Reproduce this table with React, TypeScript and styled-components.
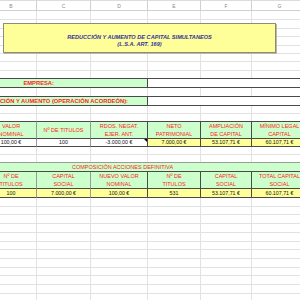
import React from "react";
import styled, { createGlobalStyle } from "styled-components";

const LIGHT = "#e2e2e2";
const MID = "#9a9a9a";
const DARK = "#4a4a4a";
const GREEN = "#ccffcc";
const YELLOW = "#ffff99";

// widths of columns B..H (B is scrolled 14px off the left edge)
const COLS = [51, 54, 57, 53, 51, 56, 60];
const LETTERS = ["B", "C", "D", "E", "F", "G", ""];

const GlobalStyle = createGlobalStyle`
  html, body { margin: 0; padding: 0; background: #fff; }
  body { font-family: "Liberation Sans", Arial, sans-serif; }
`;

const Sheet = styled.div`
  position: relative;
  width: 300px;
  height: 300px;
  overflow: hidden;
  background: #fff;
`;

const Grid = styled.div`
  display: flex;
  flex-direction: column;
  margin-left: -14px;
  width: ${COLS.reduce((a, b) => a + b, 0)}px;
`;

const Row = styled.div<{ $h: number; $overlap?: boolean }>`
  display: flex;
  height: ${(p) => p.$h + (p.$overlap ? 1 : 0)}px;
  margin-top: ${(p) => (p.$overlap ? -1 : 0)}px;
  position: relative;
  flex: 0 0 auto;
`;

interface CellProps {
  $w: number;
  $bg?: string;
  $r?: string;
  $b?: string;
  $t?: string;
  $align?: "left" | "center" | "right";
  $padL?: number;
  $padR?: number;
}

const Cell = styled.div<CellProps>`
  box-sizing: border-box;
  flex: 0 0 ${(p) => p.$w}px;
  width: ${(p) => p.$w}px;
  height: 100%;
  position: relative;
  background: ${(p) => p.$bg ?? "transparent"};
  border-right: 1px solid ${(p) => p.$r ?? LIGHT};
  border-bottom: 1px solid ${(p) => p.$b ?? LIGHT};
  border-top: ${(p) => (p.$t ? `1px solid ${p.$t}` : "none")};
  display: flex;
  flex-direction: column;
  justify-content: center;
  align-items: ${(p) =>
    p.$align === "left" ? "flex-start" : p.$align === "right" ? "flex-end" : "center"};
  padding-left: ${(p) => p.$padL ?? 0}px;
  padding-right: ${(p) => p.$padR ?? 0}px;
  overflow: hidden;
  white-space: nowrap;
`;

const Letter = styled(Cell)`
  color: #8a8a8a;
  font-size: 5px;
  border-top: 1px solid #dcdcdc;
  border-right-color: #d0d0d0;
  border-bottom-color: #cfcfcf;
`;

const Label = styled.span<{ $bold?: boolean }>`
  color: #ff2222;
  font-size: ${(p) => (p.$bold ? 5.8 : 5.5)}px;
  line-height: 8px;
  font-weight: ${(p) => (p.$bold ? 700 : 400)};
  text-align: center;
`;

const Value = styled.span`
  color: #111;
  font-size: 5.3px;
  line-height: 7px;
`;

const Comment = styled.i`
  position: absolute;
  top: 0;
  right: 0;
  width: 0;
  height: 0;
  border-top: 3px solid #000;
  border-left: 3px solid transparent;
`;

const TextBox = styled.div`
  position: absolute;
  left: 3px;
  top: 23px;
  width: 273px;
  height: 30px;
  box-sizing: border-box;
  background: ${YELLOW};
  border: 1px solid #8c8c78;
  box-shadow: 1px 1px 0 #b9b9a4;
  display: flex;
  flex-direction: column;
  align-items: center;
  padding-top: 10px;
`;

const Title = styled.span`
  color: #333399;
  font-size: 5.6px;
  line-height: 7px;
  font-weight: 700;
  font-style: italic;
  white-space: nowrap;
`;

const blank = (h: number, key: string) => (
  <Row $h={h} key={key}>
    {COLS.map((w, i) => (
      <Cell $w={w} key={i} />
    ))}
  </Row>
);

const Band = ({ text, padR }: { text: string; padR: number }) => (
  <Row $h={9} $overlap>
    <Cell $w={162} $bg={GREEN} $t={DARK} $b={DARK} $r={DARK} $align="right" $padR={padR}>
      <Label $bold>{text}</Label>
    </Cell>
    <Cell $w={220} $bg="#fff" $t={DARK} $b={DARK} $r={DARK} />
  </Row>
);

type Col = { head: string[]; value: string; bg: string; comment?: boolean };

const firstTable: Col[] = [
  { head: ["VALOR", "NOMINAL"], value: "100,00 €", bg: "#fff" },
  { head: ["Nº DE TITULOS"], value: "100", bg: "#fff" },
  { head: ["RDOS. NEGAT.", "EJER. ANT."], value: "-3.000,00 €", bg: "#fff", comment: true },
  { head: ["NETO", "PATRIMONIAL"], value: "7.000,00 €", bg: YELLOW },
  { head: ["AMPLIACIÓN", "DE CAPITAL"], value: "53.107,71 €", bg: YELLOW },
  { head: ["MÍNIMO LEGAL", "CAPITAL"], value: "60.107,71 €", bg: YELLOW },
];

const secondTable: Col[] = [
  { head: ["Nº DE", "TITULOS"], value: "100", bg: YELLOW },
  { head: ["CAPITAL", "SOCIAL"], value: "7.000,00 €", bg: YELLOW },
  { head: ["NUEVO VALOR", "NOMINAL"], value: "100,00 €", bg: YELLOW },
  { head: ["Nº DE", "TITULOS"], value: "531", bg: YELLOW },
  { head: ["CAPITAL", "SOCIAL"], value: "53.107,71 €", bg: YELLOW },
  { head: ["TOTAL CAPITAL", "SOCIAL"], value: "60.107,71 €", bg: YELLOW },
];

const inner = (i: number) => (i < 2 ? MID : DARK);

const Table = ({ cols, overlap }: { cols: Col[]; overlap: boolean }) => (
  <>
    <Row $h={17} $overlap={overlap}>
      {cols.map((c, i) => (
        <Cell $w={COLS[i]} key={i} $bg={GREEN} $t={overlap ? DARK : undefined} $b={DARK} $r={inner(i)}>
          {c.head.map((l) => (
            <Label key={l}>{l}</Label>
          ))}
        </Cell>
      ))}
      <Cell $w={COLS[6]} />
    </Row>
    <Row $h={overlap ? 8 : 9}>
      {cols.map((c, i) => (
        <Cell $w={COLS[i]} key={i} $bg={c.bg} $b={DARK} $r={inner(i)}>
          <Value>{c.value}</Value>
          {c.comment && <Comment />}
        </Cell>
      ))}
      <Cell $w={COLS[6]} />
    </Row>
  </>
);

const TOP_ROWS = [9, 9, 8, 9, 8, 8, 9, 8];
const BOTTOM_ROWS = [9, 8, 9, 9, 9, 8, 9, 9, 8, 9, 9, 9];

export default function App() {
  return (
    <>
      <GlobalStyle />
      <Sheet>
        <Grid>
          <Row $h={11}>
            {COLS.map((w, i) => (
              <Letter $w={w} key={i}>
                {LETTERS[i]}
              </Letter>
            ))}
          </Row>
          {TOP_ROWS.map((h, i) => blank(h, "t" + i))}
          <Band text="EMPRESA:" padR={93} />
          {blank(9, "m1")}
          <Band text="REDUCCIÓN Y AUMENTO (OPERACIÓN ACORDEÓN):" padR={19} />
          {blank(8, "m2")}
          {blank(8, "m3")}
          <Table cols={firstTable} overlap />
          {blank(8, "m4")}
          {blank(8, "m5")}
          <Row $h={9} $overlap>
            <Cell $w={382} $bg={GREEN} $t={MID} $b={DARK} $align="left" $padL={86}>
              <Label>COMPOSICIÓN ACCIONES DEFINITIVA</Label>
            </Cell>
          </Row>
          <Table cols={secondTable} overlap={false} />
          {BOTTOM_ROWS.map((h, i) => blank(h, "b" + i))}
        </Grid>
        <TextBox>
          <Title>REDUCCIÓN Y AUMENTO DE CAPITAL SIMULTANEOS</Title>
          <Title>(L.S.A. ART. 169)</Title>
        </TextBox>
      </Sheet>
    </>
  );
}
